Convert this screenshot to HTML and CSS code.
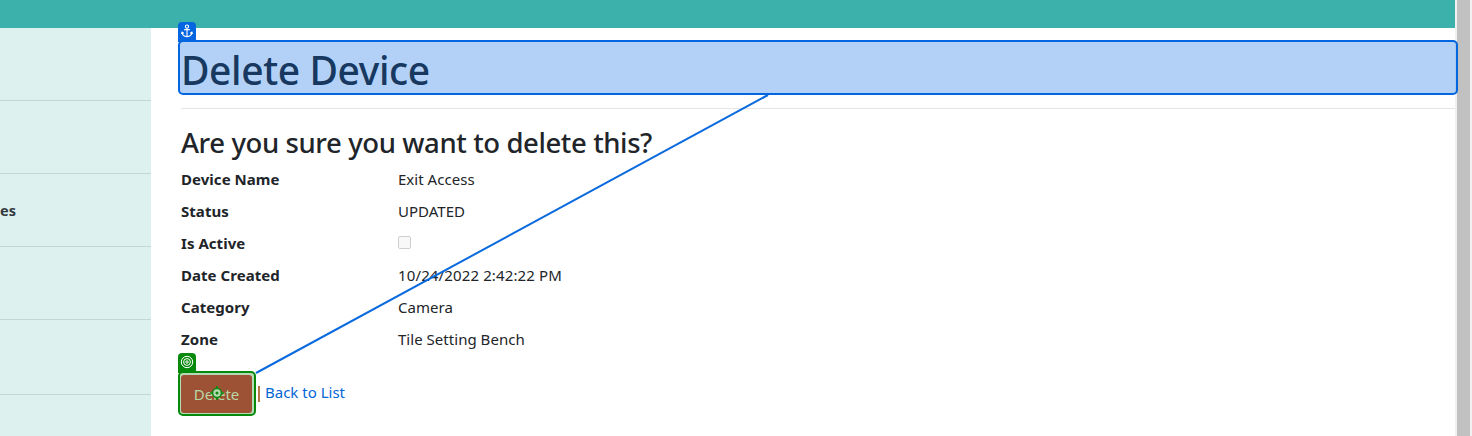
FILE: index.html
```html
<!DOCTYPE html>
<html lang="en">
<head>
<meta charset="utf-8">
<title>Delete Device</title>
<link rel="stylesheet" href="styles.css">
</head>
<body>
<div class="page">
  <header class="topbar"></header>
  <div class="body">
    <nav class="sidebar">
      <div class="nav-item"></div>
      <div class="nav-item"></div>
      <div class="nav-item"><span>es</span></div>
      <div class="nav-item"></div>
      <div class="nav-item tall"></div>
      <div class="nav-item last"></div>
    </nav>
    <main class="content">
      <h1>Delete Device</h1>
      <hr>
      <h3>Are you sure you want to delete this?</h3>
      <dl>
        <dt>Device Name</dt><dd>Exit Access</dd>
        <dt>Status</dt><dd>UPDATED</dd>
        <dt>Is Active</dt><dd><span class="check"></span></dd>
        <dt>Date Created</dt><dd class="date">10/24/2022 2:42:22 PM</dd>
        <dt>Category</dt><dd>Camera</dd>
        <dt>Zone</dt><dd>Tile Setting Bench</dd>
      </dl>
      <div class="actions">
        <button class="delete">Delete</button>
        <i class="bar"></i>
        <a class="back">Back to List</a>
      </div>
    </main>
  </div>
</div>
<div class="scrollbar"><div class="thumb"></div></div>
<svg class="connector" width="1472" height="436"><path d="M768 95 256 373" stroke="#0969de" stroke-width="2"/></svg>
<div class="outline anchor-outline"></div>
<div class="tag anchor-tag">
  <svg width="18" height="19" viewBox="0 0 18 19" fill="none" stroke="#fff" stroke-width="1.1"><circle cx="9" cy="4.600" r="1.600"/><path d="M9 6.200V14.600M6.200 7.600h5.600M4.100 10.300c.1 2.700 2 4.100 4.900 4.300 2.900-.2 4.800-1.600 4.900-4.300M3.400 11.900l.7-1.800 1.700 1.100M14.600 11.900l-.7-1.800-1.700 1.100"/></svg>
</div>
<div class="outline target-outline"></div>
<div class="tag target-tag">
  <svg width="18" height="19" viewBox="0 0 18 19" fill="none" stroke="#fff" stroke-width="1"><circle cx="9" cy="9" r="5.700"/><circle cx="9" cy="9" r="3.400"/><circle cx="9" cy="9" r="1.200"/></svg>
</div>
<svg class="pin" width="14" height="14" viewBox="0 0 14 14" fill="none"><circle cx="7" cy="7" r="4.400" fill="#b7d9b2" stroke="#0a8a0e" stroke-width="1.500"/><path d="M7 0v2.500M7 11.500V14M0 7h2.500M11.500 7H14" stroke="#0a8a0e" stroke-width="1.700"/><circle cx="7" cy="7" r="1.500" fill="#0a8a0e"/></svg>
</body>
</html>
```
FILE: styles.css
```css
* { box-sizing: border-box; }
body {
  margin: 0;
  height: 436px;
  display: flex;
  overflow: hidden;
  background: #fff;
  color: #212529;
  font-family: "Noto Sans", "Open Sans", sans-serif;
  font-size: 15px;
  line-height: 24px;
}
.page { flex: 1; display: flex; flex-direction: column; }
.topbar { height: 28px; background: #3cb0aa; }
.body { flex: 1; display: flex; }
.sidebar { width: 151px; background: #ddf1ef; }
.nav-item { height: 73px; border-bottom: 1px solid #c4d7d5; display: flex; align-items: center; font-size: 14.5px; font-weight: 700; color: #343a40; }
.nav-item.tall { height: 75px; }
.nav-item.last { border: 0; height: 41px; }
.content { flex: 1; padding: 18px 0 0 30px; }
h1, h3 { margin: 0; font-weight: 500; white-space: nowrap; }
h1 { height: 56px; line-height: 48px; font-size: 39px; letter-spacing: -.4px; }
h3 { height: 42px; padding-top: 1px; line-height: 34px; font-size: 27.5px; letter-spacing: -.4px; }
hr { margin: 6px 0 16px; border: 0; height: 1px; background: #e5e5e5; }
dl { margin: 0; display: grid; grid-template-columns: 217px 1fr; grid-auto-rows: 24px; row-gap: 8px; }
dt { font-weight: 700; letter-spacing: .04px; }
dd { margin: 0; letter-spacing: .03px; white-space: nowrap; }
.date { letter-spacing: .13px; }
.check { display: block; width: 13px; height: 13px; margin-top: 5px; border: 1px solid #cfcfcf; border-radius: 2px; background: #f8f8f8; }
.actions { display: flex; margin-top: 24px; align-items: flex-start; }
.delete { width: 71px; height: 38px; border: 0; border-radius: 3px; padding: 0; background: #9d5135; color: #b9d7a5; font: inherit; position: relative; z-index: 1; }
.bar { width: 2px; height: 16px; margin: 11px 5px 0 6px; background: linear-gradient(90deg, #b97134 50%, #ad7b50 50%); }
.back { margin-top: 5px; color: #0366d6; }
.scrollbar { width: 17px; padding: 0 2px; background: #f1f1f1; }
.thumb { height: 100%; background: #c1c1c1; }
.connector { position: absolute; left: 0; top: 0; }
.outline { position: absolute; border-radius: 5px; border: 2px solid; }
.anchor-outline { left: 178px; top: 40px; width: 1280px; height: 55px; border-color: #0366e0; background: rgba(3, 102, 224, .3); }
.target-outline { left: 178px; top: 371px; width: 78px; height: 45px; border-color: #078a0b; background: #b5dab6; }
.tag { position: absolute; left: 178px; width: 18px; height: 20px; border-radius: 4px 4px 0 0; }
.tag svg { display: block; }
.anchor-tag { top: 22px; background: #0366e0; }
.target-tag { top: 353px; background: #078a0b; }
.pin { position: absolute; left: 210px; top: 386px; z-index: 2; }
```
